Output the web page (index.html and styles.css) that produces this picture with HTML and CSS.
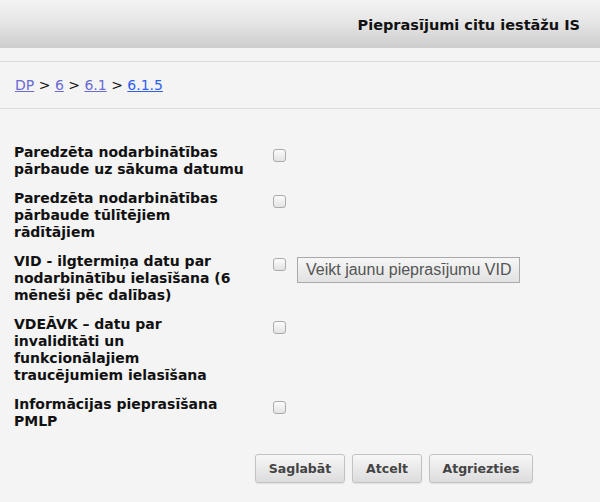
FILE: index.html
```html
<!DOCTYPE html>
<html lang="lv">
<head>
<meta charset="utf-8">
<title>Pieprasījumi citu iestāžu IS</title>
<link rel="stylesheet" href="styles.css">
</head>
<body>
<header class="topbar">
  <h1 class="title">Pieprasījumi citu iestāžu IS</h1>
</header>
<nav class="crumbs">
  <span><a href="#" class="visited">DP</a> &gt; <a href="#" class="visited">6</a> &gt; <a href="#" class="visited">6.1</a> &gt; <a href="#" class="current">6.1.5</a></span>
</nav>
<form class="form">
  <div class="rows">
    <label class="lbl" for="c1">Paredzēta nodarbinātības pārbaude uz sākuma datumu</label>
    <div class="cell"><input type="checkbox" id="c1" class="chk"></div>
    <div class="extra"></div>

    <label class="lbl" for="c2">Paredzēta nodarbinātības pārbaude tūlītējiem rādītājiem</label>
    <div class="cell"><input type="checkbox" id="c2" class="chk"></div>
    <div class="extra"></div>

    <label class="lbl" for="c3">VID - ilgtermiņa datu par nodarbinātību ielasīšana (6 mēneši pēc dalības)</label>
    <div class="cell"><input type="checkbox" id="c3" class="chk"></div>
    <div class="extra"><button type="button" class="btn-plain">Veikt jaunu pieprasījumu VID</button></div>

    <label class="lbl" for="c4">VDEĀVK – datu par invaliditāti un funkcionālajiem traucējumiem ielasīšana</label>
    <div class="cell"><input type="checkbox" id="c4" class="chk"></div>
    <div class="extra"></div>

    <label class="lbl" for="c5">Informācijas pieprasīšana PMLP</label>
    <div class="cell"><input type="checkbox" id="c5" class="chk"></div>
    <div class="extra"></div>
  </div>
  <div class="actions">
    <button type="button" class="btn btn-save">Saglabāt</button>
    <button type="button" class="btn btn-cancel">Atcelt</button>
    <button type="button" class="btn btn-back">Atgriezties</button>
  </div>
</form>
</body>
</html>
```

FILE: styles.css
```css
html, body {
  margin: 0;
  padding: 0;
}
body {
  background: #f4f4f4;
  font-family: "DejaVu Sans", Verdana, sans-serif;
  color: #111;
  width: 600px;
  height: 502px;
  overflow: hidden;
}
.topbar {
  height: 48px;
  background: linear-gradient(#f3f3f3, #e6e6e6 45%, #cdcdcd);
  display: flex;
  align-items: center;
  justify-content: flex-end;
  padding-right: 20px;
  margin-bottom: 13px;
}
.title {
  margin: 0;
  font-size: 14.5px;
  font-weight: bold;
  color: #111;
  padding-top: 1px;
}
.crumbs {
  border-top: 1px solid #dcdcdc;
  border-bottom: 1px solid #dcdcdc;
  box-sizing: border-box;
  height: 48px;
  display: flex;
  align-items: center;
  padding-left: 15px;
  font-size: 14px;
  color: #111;
}
.crumbs a { text-decoration: underline; }
.crumbs .visited { color: #6a6ad2; }
.crumbs .current { color: #2e5ff0; }
.form {
  padding: 35px 0 0 14px;
}
.rows {
  display: grid;
  grid-template-columns: 259px 24px auto;
  row-gap: 12px;
  align-items: start;
}
.lbl {
  font-weight: bold;
  font-size: 14px;
  line-height: 17px;
  color: #111;
  width: 237px;
}
.cell {
  padding-top: 5px;
}
.chk {
  appearance: none;
  -webkit-appearance: none;
  margin: 0;
  width: 13px;
  height: 13px;
  display: block;
  box-sizing: border-box;
  border: 1px solid #ababab;
  border-radius: 3px;
  background: linear-gradient(#fbfbfb, #e3e3e3);
}
.extra {
  padding-top: 4px;
}
.btn-plain {
  font-family: "Liberation Sans", Arial, sans-serif;
  font-size: 16px;
  color: #555;
  height: 26px;
  padding: 0 8px;
  border: 1px solid #a9a9a9;
  border-radius: 0;
  background: linear-gradient(#f6f6f6, #e2e2e2);
  margin: 0;
}
.actions {
  display: flex;
  gap: 7px;
  padding: 24px 0 0 241px;
}
.btn {
  font-family: "DejaVu Sans", Verdana, sans-serif;
  font-weight: bold;
  font-size: 12.5px;
  color: #444;
  height: 29px;
  border: 1px solid #c2c2c2;
  border-radius: 3px;
  background: linear-gradient(#f7f7f7, #dcdcdc);
  margin: 0;
  box-shadow: 0 1px 1px rgba(0,0,0,0.08);
}
.btn-save { width: 90px; }
.btn-cancel { width: 70px; }
.btn-back { width: 104px; }
```
